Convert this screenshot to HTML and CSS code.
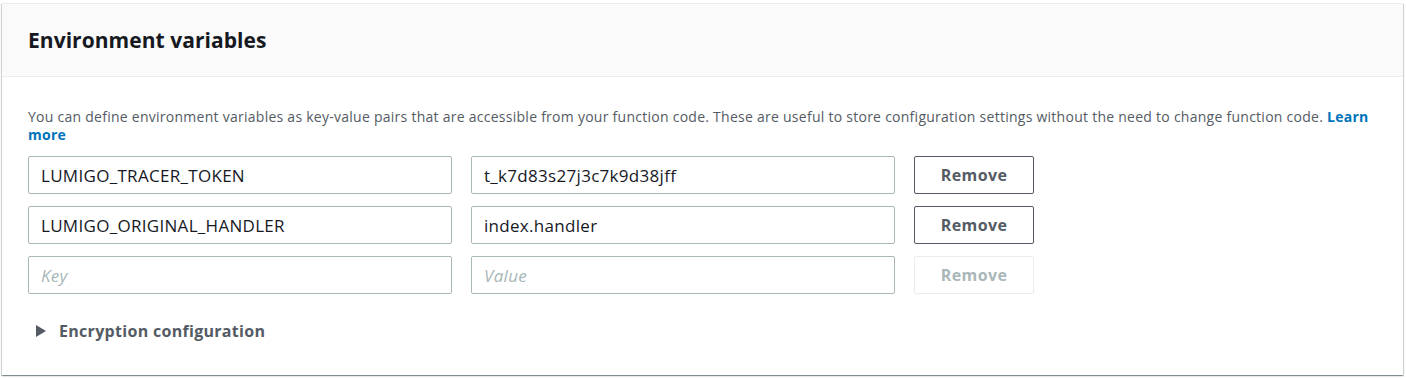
FILE: index.html
```html
<!DOCTYPE html>
<html lang="en">
<head>
    <meta charset="UTF-8">
    <title>Environment variables</title>
    <link rel="stylesheet" href="styles.css">
</head>
<body>
    <!-- Environment variables panel -->
    <div class="panel">
        <div class="panel-header">
            <h2 class="panel-title">Environment variables</h2>
        </div>
        <div class="panel-body">
            <p class="description">You can define environment variables as key-value pairs that are accessible from your function code. These are useful to store configuration settings without the need to change function code. <a href="#" class="learn-more">Learn more</a></p>

            <div class="var-list">
                <div class="var-row">
                    <input class="field" type="text" value="LUMIGO_TRACER_TOKEN">
                    <input class="field" type="text" value="t_k7d83s27j3c7k9d38jff">
                    <button class="remove-btn">Remove</button>
                </div>
                <div class="var-row">
                    <input class="field" type="text" value="LUMIGO_ORIGINAL_HANDLER">
                    <input class="field" type="text" value="index.handler">
                    <button class="remove-btn">Remove</button>
                </div>
                <div class="var-row">
                    <input class="field" type="text" placeholder="Key">
                    <input class="field" type="text" placeholder="Value">
                    <button class="remove-btn" disabled>Remove</button>
                </div>
            </div>

            <div class="expander">
                <span class="caret"></span>
                <span class="expander-label">Encryption configuration</span>
            </div>
        </div>
    </div>
</body>
</html>
```

FILE: styles.css
```css
* {
    margin: 0;
    padding: 0;
    box-sizing: border-box;
}

body {
    font-family: 'Open Sans', 'Liberation Sans', sans-serif;
    background: #ffffff;
    padding: 3px 2px 2px 2px;
    color: #16191f;
}

/* Panel */
.panel {
    width: 1401px;
    height: 372px;
    background: #ffffff;
    border-top: 1px solid #eaeded;
    box-shadow: 0 1px 1px 0 rgba(0, 28, 36, 0.3), 1px 1px 1px 0 rgba(0, 28, 36, 0.15), -1px 1px 1px 0 rgba(0, 28, 36, 0.15);
}

.panel-header {
    height: 73px;
    background: #fafafa;
    border-bottom: 1px solid #eaeded;
    display: flex;
    align-items: center;
    padding: 0 26px;
}

.panel-title {
    font-size: 21px;
    font-weight: 700;
    color: #16191f;
    letter-spacing: 0.05px;
}

.panel-body {
    padding: 31px 26px 0 26px;
}

.description {
    font-size: 14px;
    line-height: 18px;
    color: #545b64;
    letter-spacing: 0.26px;
}

.learn-more {
    color: #0073bb;
    font-weight: 700;
    text-decoration: none;
}

/* Key / value rows */
.var-list {
    display: flex;
    flex-direction: column;
    gap: 12px;
    margin-top: 12px;
}

.var-row {
    display: flex;
    gap: 19px;
}

.field {
    width: 424px;
    height: 38px;
    border: 1px solid #aab7b8;
    border-radius: 2px;
    padding: 0 12px;
    font-family: 'Open Sans', 'Liberation Sans', sans-serif;
    font-size: 17px;
    letter-spacing: 0.3px;
    color: #16191f;
    background: #ffffff;
    outline: none;
}

.field::placeholder {
    color: #aab7b8;
    font-style: italic;
}

.remove-btn {
    width: 120px;
    height: 38px;
    border: 1px solid #545b64;
    border-radius: 2px;
    background: #ffffff;
    font-family: 'Open Sans', 'Liberation Sans', sans-serif;
    font-size: 16px;
    font-weight: 700;
    letter-spacing: 0.4px;
    color: #545b64;
}

.remove-btn:disabled {
    border-color: #eaeded;
    color: #aab7b8;
}

/* Encryption expander */
.expander {
    display: flex;
    align-items: center;
    gap: 13px;
    margin-top: 26px;
    padding-left: 8px;
}

.caret {
    width: 0;
    height: 0;
    border-top: 6px solid transparent;
    border-bottom: 6px solid transparent;
    border-left: 10px solid #545b64;
}

.expander-label {
    font-size: 16px;
    font-weight: 700;
    letter-spacing: 0.3px;
    color: #545b64;
}
```
